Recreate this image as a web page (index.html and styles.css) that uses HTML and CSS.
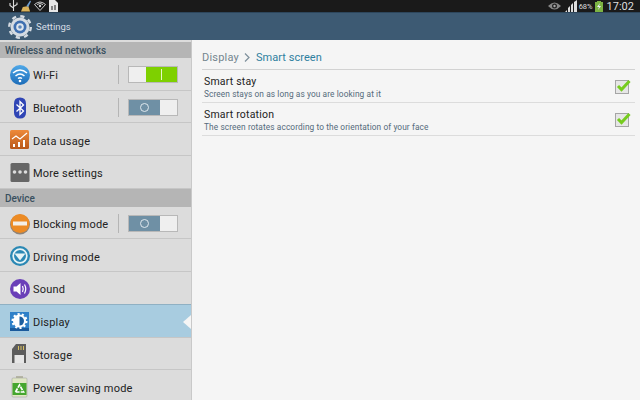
FILE: index.html
```html
<!DOCTYPE html>
<html lang="en">
<head>
    <meta charset="UTF-8">
    <title>Settings</title>
    <link rel="stylesheet" href="styles.css">
</head>
<body>
    <div class="status-bar">
        <div class="status-left">
            <svg width="9" height="12" viewBox="0 0 9 12"><path d="M4.500 0v11M1 3v2.500l3.500 2.500M8 2.500v2l-3.500 2" fill="none" stroke="#ddd" stroke-width="1.100"/></svg>
            <svg width="10" height="12" viewBox="0 0 11 12"><path d="M0 12l2-5 6-1 2 6z" fill="#d9b25a"/><path d="M6 6l4-6 1 1-3 6z" fill="#6f9ed0"/></svg>
            <svg width="12" height="10" viewBox="0 0 12 10"><path d="M.5 3.500q5.500-5 11 0L6 9.500z" fill="none" stroke="#ccc" stroke-width="1"/><path d="M3 3.500q3-2 6 0" fill="none" stroke="#ccc" stroke-width="1"/><circle cx="6" cy="5" r="1.200" fill="#ddd"/></svg>
            <svg width="9" height="12" viewBox="0 0 9 12"><path d="M0 0h6l3 3v9H0z" fill="#e8e8e8"/><path d="M2.500 6h1v4h-1zM5.500 5h1v5h-1z" fill="#222"/></svg>
        </div>
        <div class="status-right">
            <svg width="13" height="10" viewBox="0 0 13 10"><path d="M0 5q6.500-7 13 0q-6.500 7-13 0z" fill="#888"/><circle cx="6.500" cy="5" r="2.500" fill="#222"/><circle cx="6.500" cy="5" r="1.200" fill="#aaa"/></svg>
            <svg class="signal" width="13" height="12" viewBox="0 0 13 12"><path d="M0 12l2-2v2zM3 12V8l2-2v6zM6 12V5l2-2v9zM9 12V2l3-2v12z" fill="#ddd"/></svg>
            <span class="battery-text">68%</span>
            <svg width="8" height="11" viewBox="0 0 8 11"><path d="M2 0h4v1h2v10H0V1h2z" fill="#7cb342"/><path d="M5 2L2 6h2l-1 3 3-4H4z" fill="#eef"/></svg>
            <span class="clock">17:02</span>
        </div>
    </div>

    <header class="action-bar">
        <svg class="gear" width="24" height="24" viewBox="0 0 24 24">
            <circle cx="12" cy="12" r="9.500" fill="#d5dbe2"/>
            <circle cx="12" cy="12" r="10.800" fill="none" stroke="#d5dbe2" stroke-width="2.400" stroke-dasharray="4.200 4.280"/>
            <circle cx="12" cy="12" r="6.500" fill="#3f6fb0"/>
            <circle cx="12" cy="12" r="3.800" fill="#dfe6ee"/>
            <circle cx="12" cy="12" r="1.800" fill="#5c86bb"/>
        </svg>
        <span class="app-title">Settings</span>
    </header>

    <div class="main">
        <aside class="sidebar">
            <div class="section">Wireless and networks</div>
            <div class="row">
                <svg class="icon" width="22" height="22" viewBox="0 0 22 22"><defs><linearGradient id="blue" x1="0" y1="0" x2="0" y2="1"><stop offset="0" stop-color="#4fa8e8"/><stop offset="1" stop-color="#1c6cb8"/></linearGradient></defs><circle cx="11" cy="11" r="10" fill="url(#blue)"/><path d="M4 9q7-6 14 0M6.500 12q4.500-4 9 0M9 14.500q2-1.500 4 0" fill="none" stroke="#fff" stroke-width="1.500"/><circle cx="11" cy="17" r="1.300" fill="#fff"/></svg>
                <span class="row-label">Wi-Fi</span>
                <span class="divider"></span>
                <span class="toggle"><span class="knob on"><span class="bar"></span></span></span>
            </div>
            <div class="row">
                <svg class="icon" width="22" height="22" viewBox="0 0 22 22"><path d="M11 0.500q6 0 6 6v9q0 6-6 6t-6-6v-9q0-6 6-6z" fill="#2f45b5"/><path d="M7.500 7.500l7 6.500-3.500 3.500V4.500l3.500 3.500-7 6.500" fill="none" stroke="#fff" stroke-width="1.300"/></svg>
                <span class="row-label">Bluetooth</span>
                <span class="divider"></span>
                <span class="toggle"><span class="knob off"><span class="ring"></span></span></span>
            </div>
            <div class="row">
                <svg class="icon" width="22" height="22" viewBox="0 0 22 22"><defs><linearGradient id="orange" x1="0" y1="0" x2="0" y2="1"><stop offset="0" stop-color="#ee8a3a"/><stop offset="1" stop-color="#b9581a"/></linearGradient></defs><rect x="1" y="1" width="19" height="19" rx="1.500" fill="url(#orange)"/><path d="M3 10l4-3 4 3 7-6" fill="none" stroke="#fff" stroke-width="1.200"/><path d="M4 15h2v3H4zM9 13h2v5H9zM14 11h2v7h-2z" fill="#fff"/></svg>
                <span class="row-label">Data usage</span>
            </div>
            <div class="row">
                <svg class="icon" width="22" height="22" viewBox="0 0 22 22"><rect x="1.500" y="1" width="19" height="19" rx="1.500" fill="#666"/><circle cx="5.500" cy="10" r="1.800" fill="#ddd"/><circle cx="11" cy="10" r="1.800" fill="#ddd"/><circle cx="16.500" cy="10" r="1.800" fill="#ddd"/></svg>
                <span class="row-label">More settings</span>
            </div>
            <div class="section section-device">Device</div>
            <div class="row">
                <svg class="icon" width="22" height="22" viewBox="0 0 22 22"><circle cx="11" cy="11.500" r="10" fill="#8f8478"/><circle cx="11" cy="10.500" r="9.500" fill="#ec8b25"/><rect x="4" y="8.500" width="14" height="4" fill="#f3efe8"/></svg>
                <span class="row-label">Blocking mode</span>
                <span class="divider"></span>
                <span class="toggle"><span class="knob off"><span class="ring"></span></span></span>
            </div>
            <div class="row">
                <svg class="icon" width="22" height="22" viewBox="0 0 22 22"><circle cx="11" cy="11" r="10" fill="#2b88b4"/><circle cx="11" cy="11" r="6.800" fill="none" stroke="#e8f4f6" stroke-width="1.700"/><path d="M5.500 8.500h11L11 15.500z" fill="#e8f4f6"/></svg>
                <span class="row-label">Driving mode</span>
            </div>
            <div class="row">
                <svg class="icon" width="22" height="22" viewBox="0 0 22 22"><circle cx="11" cy="11" r="10" fill="#6a3fb8"/><path d="M4.500 8.500h3l4-3.500v12l-4-3.500h-3z" fill="#fff"/><path d="M13.500 8q1.500 3 0 6M15.500 6.500q2.500 4.500 0 9" fill="none" stroke="#fff" stroke-width="1.200"/></svg>
                <span class="row-label">Sound</span>
            </div>
            <div class="row row-active">
                <svg class="icon" width="22" height="22" viewBox="0 0 22 22"><rect x="1" y="1" width="19" height="19" fill="#2f80c8"/><rect x="1" y="17" width="19" height="3" fill="#1a5a9c"/><circle cx="10.500" cy="10" r="6.500" fill="#fff" stroke="#fff" stroke-dasharray="2 2" stroke-width="3"/><path d="M10.500 5.500a4.500 4.500 0 0 1 0 9z" fill="#1d5f9f"/></svg>
                <span class="row-label">Display</span>
                <span class="pointer"></span>
            </div>
            <div class="row">
                <svg class="icon" width="22" height="22" viewBox="0 0 22 22"><path d="M7 1h10v19H3V6z" fill="#5c5c5c"/><path d="M9 3h1v4H9zM11.500 3h1v4h-1zM14 3h1v4h-1z" fill="#d8c060"/><rect x="5.500" y="12" width="9.500" height="8" fill="#e6e6e6"/></svg>
                <span class="row-label">Storage</span>
            </div>
            <div class="row">
                <svg class="icon" width="22" height="22" viewBox="0 0 22 22"><rect x="7" y="0" width="7" height="2" fill="#b5b5a5"/><rect x="3" y="2" width="15" height="19" rx="1" fill="#dfe6c4" stroke="#999" stroke-width=".5"/><rect x="3.500" y="7" width="14" height="12" fill="#45a62e"/><path d="M6.500 16l4-7 4 7z" fill="none" stroke="#fff" stroke-width="1.700" stroke-dasharray="4 1"/></svg>
                <span class="row-label">Power saving mode</span>
            </div>
        </aside>

        <main class="content">
            <div class="breadcrumb">
                <span class="crumb-parent">Display</span>
                <svg class="crumb-arrow" width="6" height="9" viewBox="0 0 6 9"><path d="M1 .500l4 4-4 4" fill="none" stroke="#7d8f9b" stroke-width="1.200"/></svg>
                <span class="crumb-current">Smart screen</span>
            </div>
            <div class="option">
                <div class="option-text">
                    <div class="option-title">Smart stay</div>
                    <div class="option-desc">Screen stays on as long as you are looking at it</div>
                </div>
                <svg class="check" width="16" height="16" viewBox="0 0 16 16"><rect x=".5" y="2.500" width="13" height="13" fill="#e6e6e6" stroke="#a5a5a5"/><path d="M3 8l3.500 3.500L14.500 3" fill="none" stroke="#76cc1e" stroke-width="3"/></svg>
            </div>
            <div class="option">
                <div class="option-text">
                    <div class="option-title">Smart rotation</div>
                    <div class="option-desc">The screen rotates according to the orientation of your face</div>
                </div>
                <svg class="check" width="16" height="16" viewBox="0 0 16 16"><rect x=".5" y="2.500" width="13" height="13" fill="#e6e6e6" stroke="#a5a5a5"/><path d="M3 8l3.500 3.500L14.500 3" fill="none" stroke="#76cc1e" stroke-width="3"/></svg>
            </div>
        </main>
    </div>
</body>
</html>
```
FILE: styles.css
```css
/* General */
body {
    margin: 0;
    width: 640px;
    height: 400px;
    overflow: hidden;
    font-family: "Roboto", "Liberation Sans", sans-serif;
    background-color: #f5f5f5;
}

/* Status bar */
.status-bar {
    display: flex;
    justify-content: space-between;
    align-items: center;
    height: 12px;
    background-color: #1a1a1a;
    color: #dddddd;
}

.status-left {
    display: flex;
    align-items: center;
    gap: 3px;
    padding-left: 9px;
}

.status-right {
    display: flex;
    align-items: center;
    gap: 1px;
    padding-right: 6px;
}

.signal {
    margin-left: 3px;
}

.battery-text {
    font-size: 7.5px;
    margin-right: 1px;
}

.clock {
    font-size: 11px;
    margin-left: 3px;
}

/* Action bar */
.action-bar {
    display: flex;
    align-items: center;
    height: 28px;
    background-color: #3d5a73;
    padding-left: 8px;
    border-top: 1px solid #2d465c;
    box-sizing: border-box;
}

.app-title {
    margin-left: 4px;
    font-size: 9.5px;
    color: #d8dfe6;
}

/* Layout */
.main {
    display: flex;
    height: 360px;
}

/* Sidebar */
.sidebar {
    width: 192px;
    flex-shrink: 0;
    background-color: #dcdcdc;
    padding-top: 2px;
    box-sizing: border-box;
    border-right: 1px solid #c9c9c9;
}

.section {
    height: 16px;
    line-height: 17px;
    padding-left: 5px;
    background-color: #b5b5b5;
    color: #39505f;
    font-size: 10px;
    font-weight: 500;
}

.section-device {
    height: 18px;
    line-height: 20px;
}

.row {
    position: relative;
    display: flex;
    align-items: center;
    height: 32.700px;
    box-sizing: border-box;
    padding: 2px 0 0 9px;
    border-bottom: 1px solid #c6c6c6;
    color: #222222;
    font-size: 11px;
}

.row-active {
    background-color: #a8cce0;
    border-top: 1px solid #8fb0c3;
    margin-top: -1px;
    height: 33.700px;
}

.icon {
    flex-shrink: 0;
}

.row-label {
    margin-left: 2px;
    padding-top: 2px;
    flex: 1;
    letter-spacing: 0.2px;
}

.divider {
    width: 1px;
    height: 19px;
    background-color: #b5b5b5;
    margin-right: 9px;
}

.toggle {
    display: block;
    width: 50px;
    height: 17px;
    margin-right: 13px;
    background-color: #efefef;
    border: 1px solid #b8b8b8;
    box-sizing: border-box;
    position: relative;
}

.knob {
    position: absolute;
    top: 0;
    bottom: 0;
    display: flex;
    align-items: center;
    justify-content: center;
}

.knob.on {
    right: 0;
    width: 31px;
    background-color: #7ed000;
}

.knob.off {
    left: 0;
    width: 31px;
    background-color: #6f90a5;
}

.bar {
    width: 1px;
    height: 11px;
    background-color: #e8f7c8;
}

.ring {
    width: 7px;
    height: 7px;
    border: 1px solid #dfe8ee;
    border-radius: 50%;
}

.pointer {
    position: absolute;
    right: 0;
    top: 10px;
    border-top: 7px solid transparent;
    border-bottom: 7px solid transparent;
    border-right: 8px solid #f5f5f5;
}

/* Content */
.content {
    flex: 1;
    padding: 0 5px 0 10px;
}

.breadcrumb {
    display: flex;
    align-items: center;
    height: 30px;
    padding-top: 6px;
    box-sizing: border-box;
    border-bottom: 1px solid #d2d2d2;
    font-size: 11px;
    letter-spacing: 0.2px;
}

.crumb-parent {
    color: #74858f;
}

.crumb-arrow {
    margin: 0 6px 0 5px;
}

.crumb-current {
    color: #2f7f9f;
    letter-spacing: 0.05px;
}

.option {
    display: flex;
    align-items: center;
    justify-content: space-between;
    height: 33px;
    padding: 2px 2px 0 2px;
    box-sizing: border-box;
    border-bottom: 1px solid #dcdcdc;
}

.option-title {
    font-size: 10.5px;
    line-height: 13px;
    color: #222222;
    letter-spacing: 0.2px;
}

.option-desc {
    font-size: 8.3px;
    line-height: 12px;
    color: #546a7b;
    letter-spacing: 0.1px;
}

.check {
    margin: -3px 2px 0 0;
}
```
